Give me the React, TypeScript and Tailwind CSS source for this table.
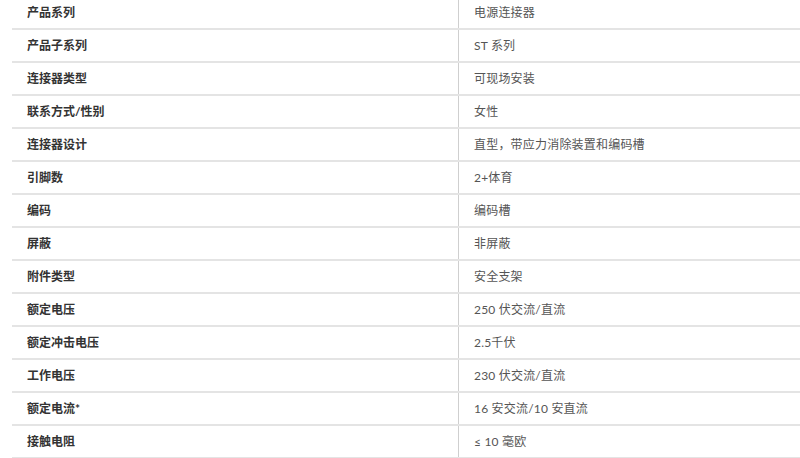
const rows: [string, string][] = [
  ['产品系列', '电源连接器'],
  ['产品子系列', 'ST 系列'],
  ['连接器类型', '可现场安装'],
  ['联系方式/性别', '女性'],
  ['连接器设计', '直型，带应力消除装置和编码槽'],
  ['引脚数', '2+体育'],
  ['编码', '编码槽'],
  ['屏蔽', '非屏蔽'],
  ['附件类型', '安全支架'],
  ['额定电压', '250 伏交流/直流'],
  ['额定冲击电压', '2.5千伏'],
  ['工作电压', '230 伏交流/直流'],
  ['额定电流*', '16 安交流/10 安直流'],
  ['接触电阻', '≤ 10 毫欧'],
];

export default function App() {
  return (
    <div className="w-[800px] h-[458px] overflow-hidden bg-white font-['Lato','Noto_Sans_CJK_SC',sans-serif] text-[12px]">
      <div className="ml-3 -mt-[3px]">
        {rows.map(([label, value], i) => (
          <div key={i} className="flex h-[33px] border-b-2 border-[#e4e4e4]">
            <div className="w-[446px] shrink-0 flex items-center pl-[15px] font-bold text-[#333]">
              {label}
            </div>
            <div className="flex-1 flex items-center pl-[15px] border-l border-[#cfcfcf] text-[#555] tracking-[0.2px]">
              {value}
            </div>
          </div>
        ))}
      </div>
    </div>
  );
}
